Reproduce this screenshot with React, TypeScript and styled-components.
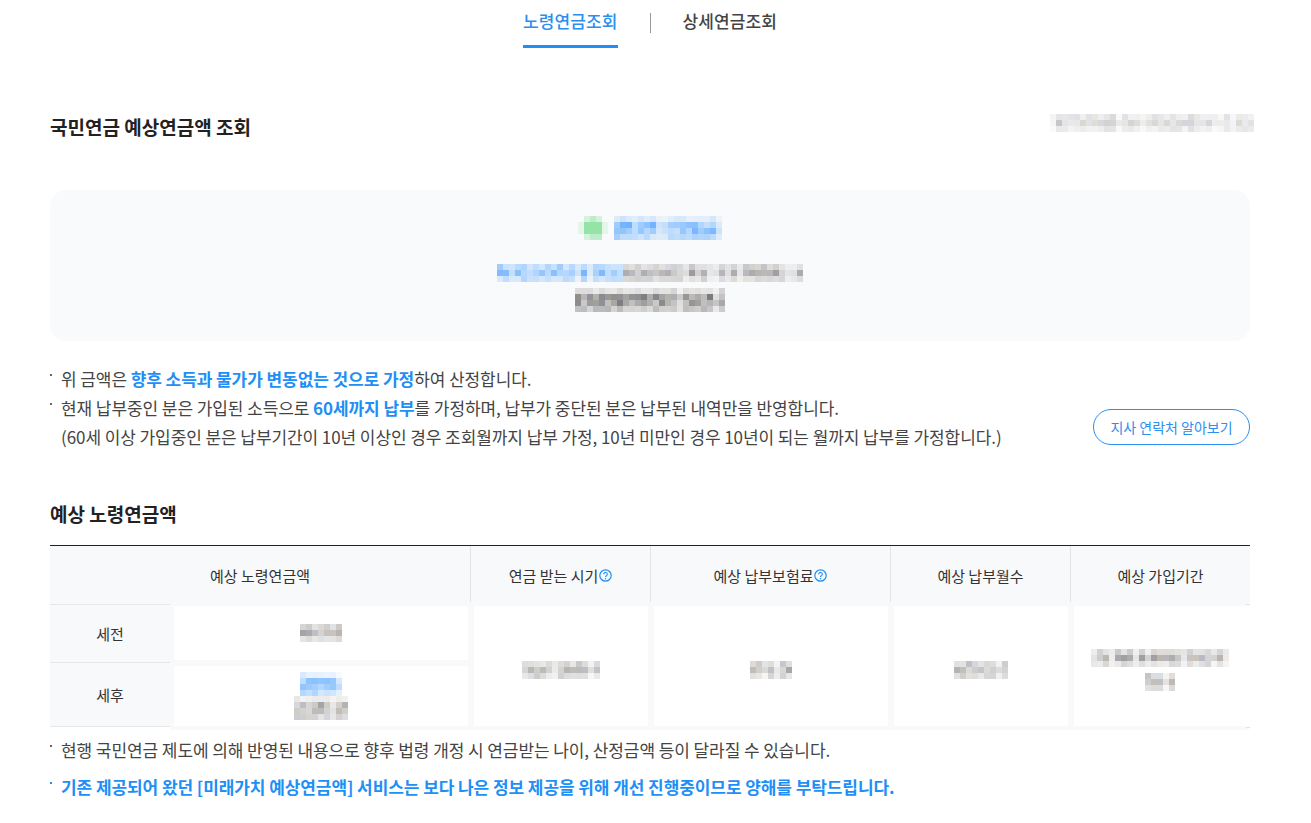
// App.tsx
import React from "react";
import styled, { createGlobalStyle } from "styled-components";

const GlobalStyle = createGlobalStyle`
  html, body {
    margin: 0;
    padding: 0;
    background: #fff;
    overflow: hidden;
  }
  body {
    font-family: "Noto Sans CJK KR", "Noto Sans", sans-serif;
    color: #333;
  }
`;

const Page = styled.div`
  width: 1200px;
  height: 823px;
  padding: 0 50px;
  overflow: hidden;
`;

const Tabs = styled.nav`
  display: flex;
  justify-content: center;
  align-items: flex-start;
  height: 48px;
`;

const Tab = styled.a<{ $active?: boolean }>`
  display: block;
  height: 45px;
  line-height: 42px;
  font-size: 17px;
  font-weight: 500;
  letter-spacing: 0.1px;
  color: ${({ $active }) => ($active ? "#2b8ef0" : "#444")};
  border-bottom: 3px solid ${({ $active }) => ($active ? "#1e8ff5" : "transparent")};
`;

const TabDivider = styled.span`
  width: 1px;
  height: 20px;
  margin: 13px 32px 0;
  background: #999;
`;

const TitleRow = styled.div`
  display: flex;
  justify-content: space-between;
  align-items: flex-start;
  margin-top: 64px;
  height: 78px;
`;

const PageTitle = styled.h2`
  margin: 0;
  font-size: 19px;
  font-weight: 700;
  line-height: 30px;
  color: #222;
`;

const CornerBlur = styled.div`
  margin: 2px -4px 0 0;
`;

const SummaryCard = styled.section`
  height: 151px;
  border-radius: 16px;
  background: #f9fafc;
  display: flex;
  flex-direction: column;
  align-items: center;
  padding-top: 26px;
  box-sizing: border-box;
`;

const BlurLine = styled.div<{ $height?: number }>`
  display: flex;
  height: ${({ $height }) => $height ?? 24}px;
`;

const DotGap = styled.span`
  width: 6px;
`;

const NoteRow = styled.div`
  display: flex;
  justify-content: space-between;
  align-items: flex-end;
  margin-top: 23px;
`;

const NoteList = styled.ul`
  margin: 0;
  padding: 0;
  list-style: none;
`;

const Note = styled.li<{ $strong?: boolean }>`
  position: relative;
  padding-left: 11px;
  font-size: 17px;
  line-height: 29px;
  letter-spacing: -0.08px;
  white-space: nowrap;
  color: ${({ $strong }) => ($strong ? "#1e8ff5" : "#444")};
  font-weight: ${({ $strong }) => ($strong ? 700 : 400)};

  &::before {
    content: "";
    position: absolute;
    left: 0;
    top: 10px;
    width: 2px;
    height: 2px;
    background: ${({ $strong }) => ($strong ? "#1e8ff5" : "#666")};
  }
`;

const Accent = styled.strong`
  color: #1e8ff5;
  font-weight: 700;
`;

const ContactButton = styled.button`
  width: 157px;
  height: 36px;
  margin-bottom: 6px;
  padding: 0;
  border: 1px solid #2b8ef0;
  border-radius: 18px;
  background: #fff;
  color: #2b8ef0;
  font-family: inherit;
  font-size: 14px;
`;

const SectionTitle = styled.h3`
  margin: 48px 0 0;
  font-size: 19px;
  font-weight: 700;
  line-height: 30px;
  color: #222;
`;

const Table = styled.div`
  margin-top: 16px;
  display: grid;
  grid-template-columns: 120px 300px 180px 240px 180px 180px;
  grid-template-rows: 58px 58px 65px;
  border-top: 1px solid #222;
`;

const HeadCell = styled.div<{ $span?: number; $first?: boolean }>`
  grid-column: span ${({ $span }) => $span ?? 1};
  display: flex;
  align-items: center;
  justify-content: center;
  background: #f8f9fb;
  font-size: 15px;
  color: #333;
  border-left: ${({ $first }) => ($first ? "0" : "1px solid #e3e5e8")};
  box-sizing: border-box;
`;

const RowHead = styled.div`
  display: flex;
  align-items: center;
  justify-content: center;
  background: #f8f9fb;
  border-top: 1px solid #e5e7ea;
  font-size: 15px;
  color: #333;
  box-sizing: border-box;
`;

const LastRowHead = styled(RowHead)`
  border-bottom: 1px solid #e5e7ea;
`;

const ValueCell = styled.div<{ $lastCol?: boolean }>`
  position: relative;
  grid-row: span 2;
  margin: -2px 0 -3px;
  padding-top: 7px;
  display: flex;
  flex-direction: column;
  align-items: center;
  justify-content: center;
  gap: 6px;
  box-sizing: border-box;
  border-style: solid;
  border-color: #f9f9f9;
  border-right-color: ${({ $lastCol }) => ($lastCol ? "#fff" : "#f9f9f9")};
  border-width: 4px ${({ $lastCol }) => ($lastCol ? "4px" : "2px")} 4px 4px;
  background: #fff;
`;

const CornerTicks = styled.span`
  position: absolute;
  right: -4px;
  top: -2px;
  bottom: -2px;
  width: 4px;
  border-top: 1px solid #e0e2e5;
  border-bottom: 1px solid #e0e2e5;
`;

const AmountTop = styled.div`
  margin-top: -2px;
  display: flex;
  align-items: center;
  justify-content: center;
  box-sizing: border-box;
  border-style: solid;
  border-color: #f9f9f9;
  border-width: 4px 2px 2px 4px;
  background: #fff;
`;

const AmountBottom = styled.div`
  grid-column: 2;
  margin-bottom: -3px;
  display: flex;
  flex-direction: column;
  align-items: center;
  justify-content: center;
  box-sizing: border-box;
  border-style: solid;
  border-color: #f9f9f9;
  border-width: 4px 2px 4px 4px;
  background: #fff;
`;

const Footnotes = styled(NoteList)`
  margin-top: 8px;
`;

const SecondNote = styled(Note)`
  margin-top: 8px;
`;

// 모자이크 처리된 영역
const seeded = (seed: number) => {
  let s = seed;
  return () => {
    s = (s * 9301 + 49297) % 233280;
    return s / 233280;
  };
};

const palette: Record<string, number[][]> = {
  gray: [[186, 180, 174], [170, 170, 172], [184, 186, 194], [200, 198, 194], [156, 154, 154], [208, 208, 208]],
  dark: [[146, 142, 138], [130, 132, 136], [160, 158, 154], [174, 174, 176], [120, 120, 124], [186, 186, 186]],
  light: [[214, 212, 208], [206, 206, 212], [224, 224, 224], [196, 196, 200], [228, 228, 232], [216, 214, 208]],
  blue: [[140, 195, 255], [122, 184, 255], [165, 208, 255], [105, 172, 255], [180, 216, 255], [132, 190, 250]],
};

const fades: Record<number, number[]> = {
  3: [0.62, 1, 0.5],
  4: [0.3, 1, 0.95, 0.6],
};

const Mosaic = ({
  cols,
  rows = 3,
  tone = "gray",
  seed = 1,
  bg = 255,
}: {
  cols: number;
  rows?: number;
  tone?: string;
  seed?: number;
  bg?: number;
}) => {
  const rand = seeded(seed * 131 + 7);
  const cells = [];
  for (let x = 0; x < cols; x++) {
    // 글자 사이 빈칸은 세로로 옅게 나온다
    const column = rand() < 0.16 ? 0.45 : 1;
    for (let y = 0; y < rows; y++) {
      const c = palette[tone][Math.floor(rand() * 6)];
      const a = column * fades[rows][y] * (0.78 + rand() * 0.22);
      const rgb = c.map((v) => Math.round(bg + (v - bg) * a));
      cells.push(<rect key={`${x}-${y}`} x={x * 6} y={y * 6} width="6" height="6" fill={`rgb(${rgb.join(",")})`} />);
    }
  }
  return (
    <MosaicSvg width={cols * 6} height={rows * 6} shapeRendering="crispEdges">
      {cells}
    </MosaicSvg>
  );
};

const MosaicSvg = styled.svg`
  display: block;
  flex: none;
`;

const StatusDot = () => (
  <MosaicSvg width="30" height="24" shapeRendering="crispEdges">
    <rect x="6" y="0" width="18" height="24" fill="#d6f2de" />
    <rect x="12" y="0" width="6" height="6" fill="#bdeccb" />
    <rect x="12" y="18" width="12" height="6" fill="#bdeccb" />
    <rect x="0" y="6" width="30" height="12" fill="#e6f5ea" />
    <rect x="6" y="6" width="18" height="12" fill="#94e4a8" />
  </MosaicSvg>
);

const HelpSvg = styled.svg`
  margin-left: 1px;
  flex: none;
`;

const HelpIcon = () => (
  <HelpSvg viewBox="0 0 13 13" width="13" height="13">
    <circle cx="6.5" cy="6.5" r="5.7" fill="none" stroke="#1e8ff5" strokeWidth="1.2" />
    <path d="M4.7 5.2a1.8 1.8 0 1 1 2.8 1.5c-.7.4-1 .7-1 1.3" fill="none" stroke="#1e8ff5" strokeWidth="1.1" />
    <circle cx="6.5" cy="9.7" r="0.7" fill="#1e8ff5" />
  </HelpSvg>
);

export default function App() {
  return (
    <>
      <GlobalStyle />
      <Page>
        <Tabs>
          <Tab $active>노령연금조회</Tab>
          <TabDivider />
          <Tab>상세연금조회</Tab>
        </Tabs>

        <TitleRow>
          <PageTitle>국민연금 예상연금액 조회</PageTitle>
          <CornerBlur>
            <Mosaic cols={34} tone="light" seed={3} />
          </CornerBlur>
        </TitleRow>

        <SummaryCard>
          <BlurLine $height={48}>
            <StatusDot />
            <DotGap />
            <Mosaic cols={18} rows={4} tone="blue" seed={5} bg={249} />
          </BlurLine>
          <BlurLine>
            <Mosaic cols={21} tone="blue" seed={8} bg={249} />
            <Mosaic cols={30} tone="gray" seed={9} bg={249} />
          </BlurLine>
          <BlurLine>
            <Mosaic cols={25} rows={4} tone="dark" seed={11} bg={249} />
          </BlurLine>
        </SummaryCard>

        <NoteRow>
          <NoteList>
            <Note>
              위 금액은 <Accent>향후 소득과 물가가 변동없는 것으로 가정</Accent>하여 산정합니다.
            </Note>
            <Note>
              현재 납부중인 분은 가입된 소득으로 <Accent>60세까지 납부</Accent>를 가정하며, 납부가 중단된 분은 납부된 내역만을 반영합니다.
              <br />
              (60세 이상 가입중인 분은 납부기간이 10년 이상인 경우 조회월까지 납부 가정, 10년 미만인 경우 10년이 되는 월까지 납부를 가정합니다.)
            </Note>
          </NoteList>
          <ContactButton>지사 연락처 알아보기</ContactButton>
        </NoteRow>

        <SectionTitle>예상 노령연금액</SectionTitle>
        <Table>
          <HeadCell $span={2} $first>예상 노령연금액</HeadCell>
          <HeadCell>
            연금 받는 시기
            <HelpIcon />
          </HeadCell>
          <HeadCell>
            예상 납부보험료
            <HelpIcon />
          </HeadCell>
          <HeadCell>예상 납부월수</HeadCell>
          <HeadCell>예상 가입기간</HeadCell>

          <RowHead>세전</RowHead>
          <AmountTop>
            <Mosaic cols={7} seed={21} />
          </AmountTop>
          <ValueCell>
            <Mosaic cols={13} seed={22} />
          </ValueCell>
          <ValueCell>
            <Mosaic cols={7} seed={23} />
          </ValueCell>
          <ValueCell>
            <Mosaic cols={9} seed={24} />
          </ValueCell>
          <ValueCell $lastCol>
            <CornerTicks />
            <Mosaic cols={23} seed={25} />
            <Mosaic cols={5} seed={26} />
          </ValueCell>

          <LastRowHead>세후</LastRowHead>
          <AmountBottom>
            <Mosaic cols={7} rows={4} tone="blue" seed={27} />
            <Mosaic cols={9} rows={4} seed={28} />
          </AmountBottom>
        </Table>

        <Footnotes>
          <Note>현행 국민연금 제도에 의해 반영된 내용으로 향후 법령 개정 시 연금받는 나이, 산정금액 등이 달라질 수 있습니다.</Note>
          <SecondNote $strong>기존 제공되어 왔던 [미래가치 예상연금액] 서비스는 보다 나은 정보 제공을 위해 개선 진행중이므로 양해를 부탁드립니다.</SecondNote>
        </Footnotes>
      </Page>
    </>
  );
}
